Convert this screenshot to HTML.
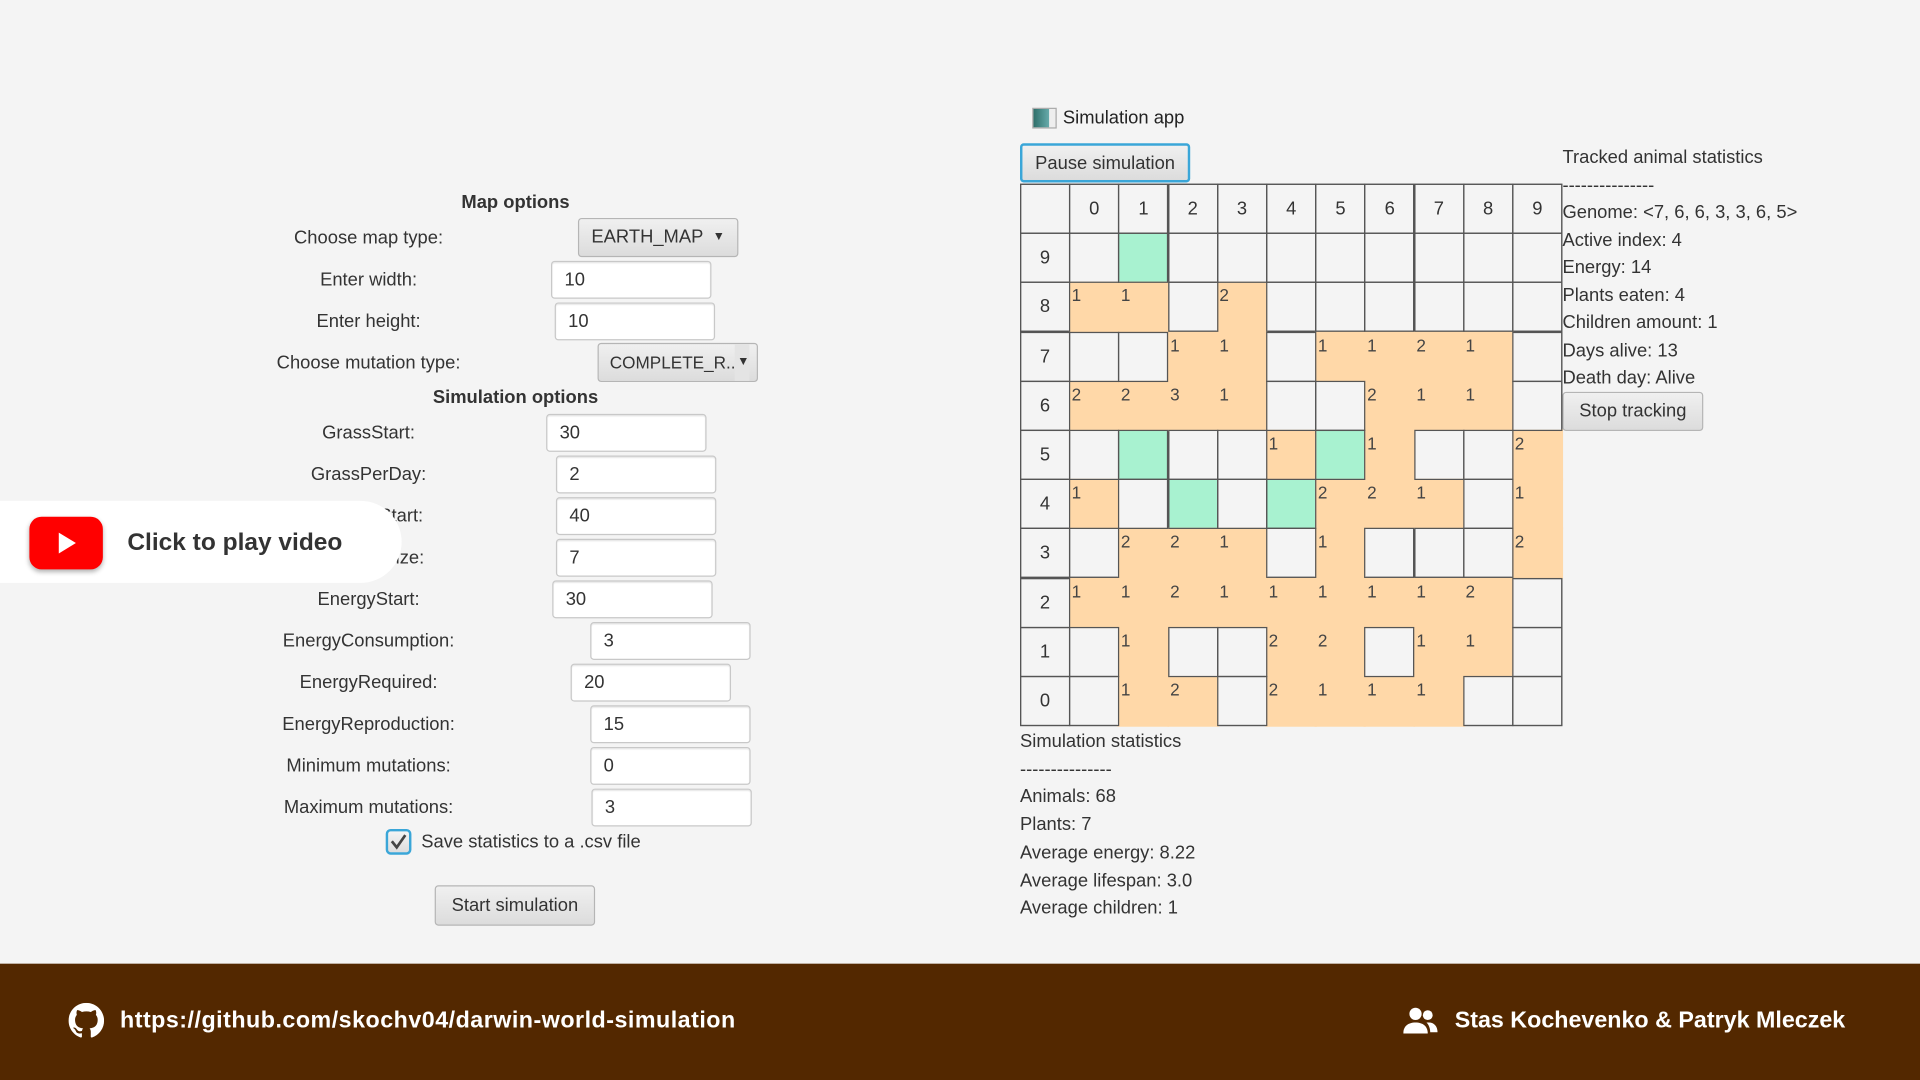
<!DOCTYPE html>
<html><head><meta charset="utf-8"><style>
html,body{margin:0;padding:0;width:1920px;height:1080px;overflow:hidden;background:#f4f4f4}
#s{position:absolute;left:0;top:0;width:1568px;height:882px;transform:scale(1.22449);transform-origin:0 0;font-family:"Liberation Sans",sans-serif;color:#333;font-size:15px}
.a{position:absolute;white-space:nowrap}
.l{position:absolute;left:151px;width:300px;text-align:center;font-size:15px;color:#333;margin-top:1px}
.f{position:absolute;background:#fff;border:1px solid #c8c8c8;border-radius:3px;box-shadow:inset 0 1px 1px #e6e6e6;font-size:15px;line-height:30px;padding-left:10px;box-sizing:border-box;width:131px;height:31px}
.b{position:absolute;background:linear-gradient(#f0f0f0,#dcdcdc);border:1px solid #b5b5b5;border-radius:3px;box-sizing:border-box;font-size:15px;text-align:center}
.h{position:absolute;font-weight:bold;font-size:15px;color:#333;width:300px;text-align:center;left:271px;margin-top:1px}
#g{position:absolute;left:833px;top:150px;width:443px;height:443px;background:#555;display:grid;grid-template-columns:repeat(11,1fr);grid-template-rows:repeat(11,1fr);gap:1.3px;padding:1px;box-sizing:border-box}
#g div{position:relative;z-index:1;background:#f4f4f4;outline:1.2px solid #555;font-size:15px;display:flex;align-items:center;justify-content:center}
#g div.o{z-index:0;background:#ffd8a8;outline:none;box-shadow:0 0 0 1.5px #ffd8a8;align-items:flex-start;justify-content:flex-start;padding:2px 0 0 1px;font-size:14px;color:#444}
#g div.g{background:#a8f2d0}
</style></head><body><div id="s">

<div class="h" style="top:156px">Map options</div>
<div class="l" style="top:185px">Choose map type:</div>
<div class="b" style="left:472px;top:178px;width:131px;height:32px;line-height:30px;text-align:left;padding-left:10px">EARTH_MAP <span style="position:absolute;right:10px;top:0;font-size:10px">&#9660;</span></div>
<div class="l" style="top:219px">Enter width:</div>
<div class="f" style="left:450px;top:213px">10</div>
<div class="l" style="top:253px">Enter height:</div>
<div class="f" style="left:453px;top:247px">10</div>
<div class="l" style="top:287px">Choose mutation type:</div>
<div class="b" style="left:488px;top:280px;width:131px;height:32px;line-height:30px;text-align:left;padding-left:9px;overflow:hidden;font-size:14px">COMPLETE_R...<span style="position:absolute;right:6px;top:0;font-size:10px;background:#e4e4e4;padding-left:2px">&#9660;</span></div>
<div class="h" style="top:315px">Simulation options</div>
<div class="l" style="top:344px">GrassStart:</div>
<div class="f" style="left:446px;top:338px">30</div>
<div class="l" style="top:378px">GrassPerDay:</div>
<div class="f" style="left:454px;top:372px">2</div>
<div class="l" style="top:412px">AnimalsStart:</div>
<div class="f" style="left:454px;top:406px">40</div>
<div class="l" style="top:446px">GenomeSize:</div>
<div class="f" style="left:454px;top:440px">7</div>
<div class="l" style="top:480px">EnergyStart:</div>
<div class="f" style="left:451px;top:474px">30</div>
<div class="l" style="top:514px">EnergyConsumption:</div>
<div class="f" style="left:482px;top:508px">3</div>
<div class="l" style="top:548px">EnergyRequired:</div>
<div class="f" style="left:466px;top:542px">20</div>
<div class="l" style="top:582px">EnergyReproduction:</div>
<div class="f" style="left:482px;top:576px">15</div>
<div class="l" style="top:616px">Minimum mutations:</div>
<div class="f" style="left:482px;top:610px">0</div>
<div class="l" style="top:650px">Maximum mutations:</div>
<div class="f" style="left:483px;top:644px">3</div>
<div class="a" style="left:315px;top:677px;width:21px;height:21px;border:2px solid #3aa6d8;border-radius:4px;box-sizing:border-box;background:linear-gradient(#f4f4f4,#ddd)"><svg width="17" height="17" viewBox="0 0 17 17" style="position:absolute;left:0;top:0"><path d="M3 8 L7 13 L14 3" stroke="#444" stroke-width="2.2" fill="none"/></svg></div>
<div class="a" style="left:344px;top:679px">Save statistics to a .csv file</div>
<div class="b" style="left:355px;top:723px;width:131px;height:33px;line-height:31px">Start simulation</div>

<div class="a" style="left:0;top:409px;width:328px;height:67px;background:#fff;border-radius:0 34px 34px 0"></div>
<div class="a" style="left:24px;top:422px;width:60px;height:43px;background:#f00;border-radius:10px;box-shadow:0 2px 4px rgba(0,0,0,.3)"><svg width="60" height="43" style="position:absolute;left:0;top:0"><path d="M24 13 L38 21.5 L24 30 Z" fill="#fff"/></svg></div>
<div class="a" style="left:104px;top:432px;font-size:20px;font-weight:bold;color:#333">Click to play video</div>

<div class="a" style="left:843px;top:88px;width:18px;height:15px;border:1px solid #aaa;background:linear-gradient(90deg,#2e6f6a,#6aa 70%,#eee 72%)"></div>
<div class="a" style="left:868px;top:88px;color:#222">Simulation app</div>
<div class="b" style="left:833px;top:117px;width:139px;height:32px;line-height:30px;border:2px solid #3aa6d8">Pause simulation</div>

<div id="g">
<div></div><div>0</div><div>1</div><div>2</div><div>3</div><div>4</div><div>5</div><div>6</div><div>7</div><div>8</div><div>9</div>
<div>9</div><div></div><div class="g"></div><div></div><div></div><div></div><div></div><div></div><div></div><div></div><div></div>
<div>8</div><div class="o">1</div><div class="o">1</div><div></div><div class="o">2</div><div></div><div></div><div></div><div></div><div></div><div></div>
<div>7</div><div></div><div></div><div class="o">1</div><div class="o">1</div><div></div><div class="o">1</div><div class="o">1</div><div class="o">2</div><div class="o">1</div><div></div>
<div>6</div><div class="o">2</div><div class="o">2</div><div class="o">3</div><div class="o">1</div><div></div><div></div><div class="o">2</div><div class="o">1</div><div class="o">1</div><div></div>
<div>5</div><div></div><div class="g"></div><div></div><div></div><div class="o">1</div><div class="g"></div><div class="o">1</div><div></div><div></div><div class="o">2</div>
<div>4</div><div class="o">1</div><div></div><div class="g"></div><div></div><div class="g"></div><div class="o">2</div><div class="o">2</div><div class="o">1</div><div></div><div class="o">1</div>
<div>3</div><div></div><div class="o">2</div><div class="o">2</div><div class="o">1</div><div></div><div class="o">1</div><div></div><div></div><div></div><div class="o">2</div>
<div>2</div><div class="o">1</div><div class="o">1</div><div class="o">2</div><div class="o">1</div><div class="o">1</div><div class="o">1</div><div class="o">1</div><div class="o">1</div><div class="o">2</div><div></div>
<div>1</div><div></div><div class="o">1</div><div></div><div></div><div class="o">2</div><div class="o">2</div><div></div><div class="o">1</div><div class="o">1</div><div></div>
<div>0</div><div></div><div class="o">1</div><div class="o">2</div><div></div><div class="o">2</div><div class="o">1</div><div class="o">1</div><div class="o">1</div><div></div><div></div>
</div>

<div class="a" style="left:1276px;top:118px;line-height:22.5px">Tracked animal statistics<br>---------------<br>Genome: &lt;7, 6, 6, 3, 3, 6, 5&gt;<br>Active index: 4<br>Energy: 14<br>Plants eaten: 4<br>Children amount: 1<br>Days alive: 13<br>Death day: Alive</div>
<div class="b" style="left:1276px;top:320px;width:115px;height:32px;line-height:30px">Stop tracking</div>

<div class="a" style="left:833px;top:595px;line-height:22.7px">Simulation statistics<br>---------------<br>Animals: 68<br>Plants: 7<br>Average energy: 8.22<br>Average lifespan: 3.0<br>Average children: 1</div>

<div class="a" style="left:0;top:787px;width:1568px;height:95px;background:#532800"></div>
<svg class="a" style="left:56px;top:819px" width="29" height="29" viewBox="0 0 16 16"><path fill="#fff" d="M8 0C3.58 0 0 3.58 0 8c0 3.54 2.29 6.530 5.47 7.59.4.07.55-.17.55-.38 0-.19-.01-.82-.01-1.490-2.010.37-2.530-.49-2.690-.94-.09-.23-.48-.94-.82-1.130-.28-.15-.68-.52-.01-.53.63-.01 1.080.58 1.230.82.72 1.210 1.870.87 2.330.66.07-.52.28-.87.51-1.070-1.780-.2-3.640-.89-3.640-3.950 0-.87.31-1.590.82-2.150-.08-.2-.36-1.020.08-2.120 0 0 .67-.21 2.200.82.64-.18 1.320-.27 2-.27.68 0 1.360.09 2 .27 1.530-1.040 2.200-.82 2.200-.82.44 1.100.16 1.920.08 2.120.51.56.82 1.270.82 2.150 0 3.070-1.870 3.750-3.650 3.950.29.25.54.73.54 1.480 0 1.070-.01 1.930-.01 2.200 0 .21.15.46.55.38A8.013 8.013 0 0016 8c0-4.420-3.580-8-8-8z"/></svg>
<div class="a" style="left:98px;top:823px;font-size:19px;font-weight:bold;color:#fff;letter-spacing:0.4px">https://github.com/skochv04/darwin-world-simulation</div>
<svg class="a" style="left:1146px;top:822px" width="28" height="24" viewBox="0 0 28 24"><circle cx="10" cy="6" r="5" fill="#fff"/><path d="M0 22c0-6 4-9 10-9s10 3 10 9z" fill="#fff"/><circle cx="20" cy="7" r="4" fill="#fff"/><path d="M21 13c4 0 7 3 7 8h-6c0-3-1-6-3-8z" fill="#fff"/></svg>
<div class="a" style="left:1188px;top:823px;font-size:19px;font-weight:bold;color:#fff">Stas Kochevenko &amp; Patryk Mleczek</div>

</div></body></html>
